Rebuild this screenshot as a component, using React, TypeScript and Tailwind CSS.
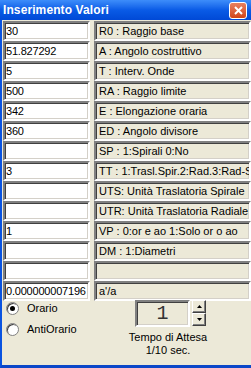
import React from 'react'

const ROWS: { value: string; label: string }[] = [
  { value: '30', label: 'R0 : Raggio base' },
  { value: '51.827292', label: 'A  : Angolo costruttivo' },
  { value: '5', label: 'T  : Interv. Onde' },
  { value: '500', label: 'RA : Raggio limite' },
  { value: '342', label: 'E  : Elongazione oraria' },
  { value: '360', label: 'ED : Angolo divisore' },
  { value: '', label: 'SP : 1:Spirali 0:No' },
  { value: '3', label: 'TT : 1:Trasl.Spir.2:Rad.3:Rad-S' },
  { value: '', label: 'UTS: Unità Traslatoria Spirale' },
  { value: '', label: 'UTR: Unità Traslatoria Radiale' },
  { value: '1', label: 'VP : 0:or e ao 1:Solo or o ao' },
  { value: '', label: 'DM : 1:Diametri' },
  { value: '', label: '' },
  { value: '0.000000007196', label: "a'/a" },
]

const sunken =
  'border-2 border-t-[#808080] border-l-[#808080] border-b-white border-r-[#ffffff] shadow-[inset_1px_1px_0_#404040,inset_-1px_-1px_0_#d4d0c8]'

function Radio({ checked, label }: { checked?: boolean; label: string }) {
  return (
    <div className="flex items-center h-[21px]">
      <div className="w-[13px] h-[13px] rounded-full border border-[#808080] bg-white flex items-center justify-center shadow-[inset_1px_1px_0_#404040]">
        {checked && <div className="w-[5px] h-[5px] rounded-full bg-black" />}
      </div>
      <span className="ml-[8px] text-[11px] text-black">{label}</span>
    </div>
  )
}

function SpinButton({ up }: { up?: boolean }) {
  return (
    <div className="w-[14px] h-[13px] bg-[#ece9d8] border border-t-white border-l-white border-b-[#404040] border-r-[#404040] shadow-[inset_-1px_-1px_0_#808080] flex items-center justify-center">
      <svg width="5" height="3" viewBox="0 0 5 3">
        {up ? <path d="M2.5 0 L5 3 L0 3 Z" fill="#000" /> : <path d="M0 0 L5 0 L2.5 3 Z" fill="#000" />}
      </svg>
    </div>
  )
}

export default function App() {
  return (
    <div
      className="w-[251px] h-[368px] bg-[#ece9d8] flex flex-col overflow-hidden"
      style={{ fontFamily: '"Liberation Sans", Arial, sans-serif' }}
    >
      {/* title bar */}
      <div className="h-[20px] shrink-0 flex items-center justify-between pl-[3px] pr-[4px] bg-gradient-to-b from-[#3d8dfa] via-[#0a5be6] to-[#0149d6]">
        <span className="text-white font-bold text-[12px] tracking-[0.1px]">Inserimento Valori</span>
        <div className="w-[18px] h-[17px] rounded-[3px] border border-white bg-gradient-to-b from-[#e8805f] to-[#d14313] flex items-center justify-center">
          <svg width="9" height="9" viewBox="0 0 9 9">
            <path d="M1 1 L8 8 M8 1 L1 8" stroke="#fff" strokeWidth="2" />
          </svg>
        </div>
      </div>

      {/* body */}
      <div className="flex-1 flex flex-col border-l-2 border-l-[#0a53e0] border-b-[3px] border-b-[#0b47c8] pt-[1px] pl-[1px]">
        {ROWS.map((r, i) => (
          <div key={i} className="flex h-[20px] gap-[4px]">
            <div className={`w-[87px] h-[20px] bg-white ${sunken} flex items-center pl-[1px] text-[11px] tracking-[-0.2px] text-black overflow-hidden whitespace-nowrap`}>
              {r.value}
            </div>
            <div className={`flex-1 h-[20px] ${sunken} flex items-center pl-[3px] text-[11px] text-black overflow-hidden whitespace-nowrap`}>
              {r.label}
            </div>
          </div>
        ))}

        {/* bottom section */}
        <div className="flex">
          <div className="w-[113px] pl-[3px] flex flex-col -mt-[3px]">
            <Radio checked label="Orario" />
            <Radio label="AntiOrario" />
          </div>
          <div className="w-[104px] flex flex-col items-center -mt-[1px]">
            <div className="flex gap-[2px] ml-[5px]">
              <div className={`w-[55px] h-[27px] ${sunken} bg-[#ece9d8] flex items-center justify-center text-[20px] text-[#333]`} style={{ fontFamily: '"Liberation Mono", monospace' }}>
                1
              </div>
              <div className="flex flex-col">
                <SpinButton up />
                <SpinButton />
              </div>
            </div>
            <div className="mt-[4px] text-[11px] text-black leading-[13px] text-center">
              Tempo di Attesa
              <br />
              1/10 sec.
            </div>
          </div>
        </div>
      </div>
    </div>
  )
}
